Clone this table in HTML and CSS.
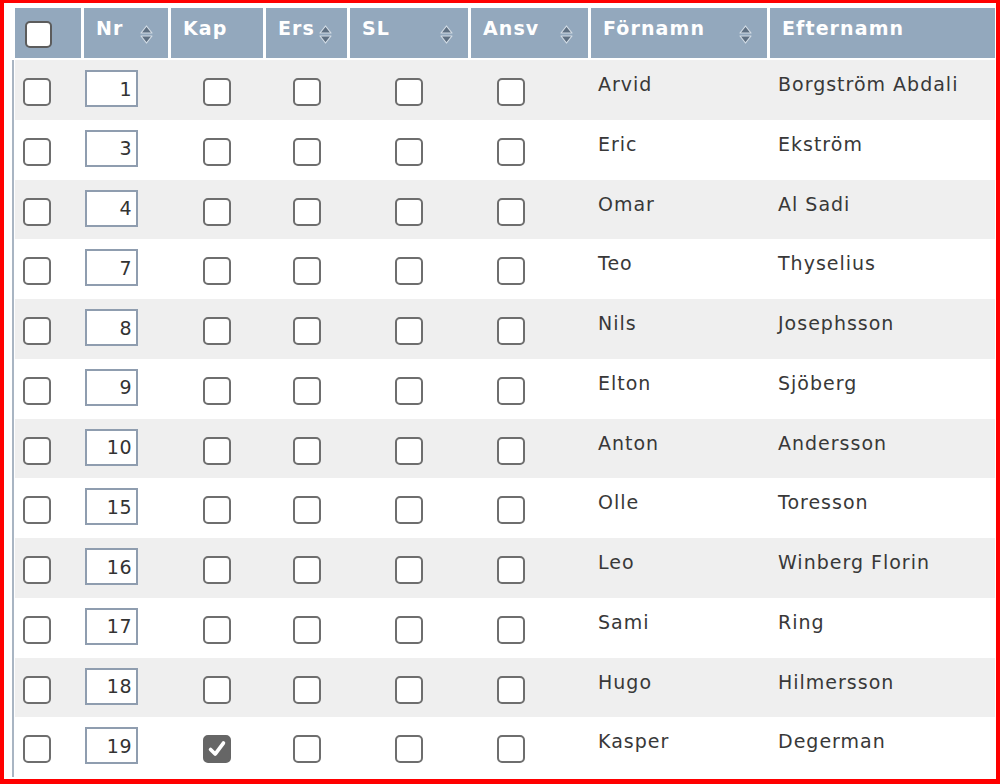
FILE: index.html
```html
<!DOCTYPE html>
<html lang="sv">
<head>
<meta charset="utf-8">
<title>Spelare</title>
<link rel="stylesheet" href="styles.css">
</head>
<body>
<div class="frame">
  <div class="thead">
    <div class="th th-cb"><span class="cb cb-head"></span></div>
    <div class="th"><span>Nr</span><svg class="sort" viewBox="0 0 13 19" width="13" height="19"><path d="M6.5 1 L12 8 H1 Z M1 11 H12 L6.5 18 Z" /></svg></div>
    <div class="th"><span>Kap</span></div>
    <div class="th th-tight"><span>Ers</span><svg class="sort" viewBox="0 0 13 19" width="13" height="19"><path d="M6.5 1 L12 8 H1 Z M1 11 H12 L6.5 18 Z" /></svg></div>
    <div class="th"><span>SL</span><svg class="sort" viewBox="0 0 13 19" width="13" height="19"><path d="M6.5 1 L12 8 H1 Z M1 11 H12 L6.5 18 Z" /></svg></div>
    <div class="th"><span>Ansv</span><svg class="sort" viewBox="0 0 13 19" width="13" height="19"><path d="M6.5 1 L12 8 H1 Z M1 11 H12 L6.5 18 Z" /></svg></div>
    <div class="th"><span>Förnamn</span><svg class="sort" viewBox="0 0 13 19" width="13" height="19"><path d="M6.5 1 L12 8 H1 Z M1 11 H12 L6.5 18 Z" /></svg></div>
    <div class="th"><span>Efternamn</span></div>
  </div>
  <div class="tbody">
    <div class="tr odd"><div class="td td-sel"><span class="cb"></span></div><div class="td td-nr"><span class="nr">1</span></div><div class="td td-c"><span class="cb"></span></div><div class="td td-c"><span class="cb"></span></div><div class="td td-c"><span class="cb"></span></div><div class="td td-ansv"><span class="cb"></span></div><div class="td td-txt">Arvid</div><div class="td td-txt td-last">Borgström Abdali</div></div>
    <div class="tr"><div class="td td-sel"><span class="cb"></span></div><div class="td td-nr"><span class="nr">3</span></div><div class="td td-c"><span class="cb"></span></div><div class="td td-c"><span class="cb"></span></div><div class="td td-c"><span class="cb"></span></div><div class="td td-ansv"><span class="cb"></span></div><div class="td td-txt">Eric</div><div class="td td-txt td-last">Ekström</div></div>
    <div class="tr odd"><div class="td td-sel"><span class="cb"></span></div><div class="td td-nr"><span class="nr">4</span></div><div class="td td-c"><span class="cb"></span></div><div class="td td-c"><span class="cb"></span></div><div class="td td-c"><span class="cb"></span></div><div class="td td-ansv"><span class="cb"></span></div><div class="td td-txt">Omar</div><div class="td td-txt td-last">Al Sadi</div></div>
    <div class="tr"><div class="td td-sel"><span class="cb"></span></div><div class="td td-nr"><span class="nr">7</span></div><div class="td td-c"><span class="cb"></span></div><div class="td td-c"><span class="cb"></span></div><div class="td td-c"><span class="cb"></span></div><div class="td td-ansv"><span class="cb"></span></div><div class="td td-txt">Teo</div><div class="td td-txt td-last">Thyselius</div></div>
    <div class="tr odd"><div class="td td-sel"><span class="cb"></span></div><div class="td td-nr"><span class="nr">8</span></div><div class="td td-c"><span class="cb"></span></div><div class="td td-c"><span class="cb"></span></div><div class="td td-c"><span class="cb"></span></div><div class="td td-ansv"><span class="cb"></span></div><div class="td td-txt">Nils</div><div class="td td-txt td-last">Josephsson</div></div>
    <div class="tr"><div class="td td-sel"><span class="cb"></span></div><div class="td td-nr"><span class="nr">9</span></div><div class="td td-c"><span class="cb"></span></div><div class="td td-c"><span class="cb"></span></div><div class="td td-c"><span class="cb"></span></div><div class="td td-ansv"><span class="cb"></span></div><div class="td td-txt">Elton</div><div class="td td-txt td-last">Sjöberg</div></div>
    <div class="tr odd"><div class="td td-sel"><span class="cb"></span></div><div class="td td-nr"><span class="nr">10</span></div><div class="td td-c"><span class="cb"></span></div><div class="td td-c"><span class="cb"></span></div><div class="td td-c"><span class="cb"></span></div><div class="td td-ansv"><span class="cb"></span></div><div class="td td-txt">Anton</div><div class="td td-txt td-last">Andersson</div></div>
    <div class="tr"><div class="td td-sel"><span class="cb"></span></div><div class="td td-nr"><span class="nr">15</span></div><div class="td td-c"><span class="cb"></span></div><div class="td td-c"><span class="cb"></span></div><div class="td td-c"><span class="cb"></span></div><div class="td td-ansv"><span class="cb"></span></div><div class="td td-txt">Olle</div><div class="td td-txt td-last">Toresson</div></div>
    <div class="tr odd"><div class="td td-sel"><span class="cb"></span></div><div class="td td-nr"><span class="nr">16</span></div><div class="td td-c"><span class="cb"></span></div><div class="td td-c"><span class="cb"></span></div><div class="td td-c"><span class="cb"></span></div><div class="td td-ansv"><span class="cb"></span></div><div class="td td-txt">Leo</div><div class="td td-txt td-last">Winberg Florin</div></div>
    <div class="tr"><div class="td td-sel"><span class="cb"></span></div><div class="td td-nr"><span class="nr">17</span></div><div class="td td-c"><span class="cb"></span></div><div class="td td-c"><span class="cb"></span></div><div class="td td-c"><span class="cb"></span></div><div class="td td-ansv"><span class="cb"></span></div><div class="td td-txt">Sami</div><div class="td td-txt td-last">Ring</div></div>
    <div class="tr odd"><div class="td td-sel"><span class="cb"></span></div><div class="td td-nr"><span class="nr">18</span></div><div class="td td-c"><span class="cb"></span></div><div class="td td-c"><span class="cb"></span></div><div class="td td-c"><span class="cb"></span></div><div class="td td-ansv"><span class="cb"></span></div><div class="td td-txt">Hugo</div><div class="td td-txt td-last">Hilmersson</div></div>
    <div class="tr"><div class="td td-sel"><span class="cb"></span></div><div class="td td-nr"><span class="nr">19</span></div><div class="td td-c"><span class="cb cb-on"><svg viewBox="0 0 24 24" width="22" height="22"><path d="M5 12.5 L10 17.5 L19 5.5" /></svg></span></div><div class="td td-c"><span class="cb"></span></div><div class="td td-c"><span class="cb"></span></div><div class="td td-ansv"><span class="cb"></span></div><div class="td td-txt">Kasper</div><div class="td td-txt td-last">Degerman</div></div>
  </div>
</div>
</body>
</html>
```
FILE: styles.css
```css
html, body {
  margin: 0;
  padding: 0;
  background: #ffffff;
}

.frame {
  box-sizing: border-box;
  width: 1000px;
  height: 784px;
  border-style: solid;
  border-color: #ff0000;
  border-width: 3px 4px 5px 4px;
  padding: 5px 1px 0 8px;
  background: #ffffff;
  font-family: "DejaVu Sans", Verdana, sans-serif;
  overflow: hidden;
}

.thead,
.tr {
  display: grid;
  grid-template-columns: 66px 84px 92px 81px 118px 117px 176px 225px;
  column-gap: 3px;
}

.thead {
  margin-left: 3px;
  height: 50px;
  margin-bottom: 2px;
}

.th {
  background: #93a8bd;
  color: #ffffff;
  font-weight: bold;
  font-size: 19px;
  letter-spacing: 1.1px;
  line-height: 22px;
  padding: 9px 15px 0 12px;
  display: flex;
  justify-content: space-between;
  align-items: flex-start;
}

.th-cb {
  padding: 13px 0 0 10px;
}

.sort {
  margin-top: 8px;
  flex: none;
}

.sort path {
  fill: #5f7082;
  stroke: #d3dce5;
  stroke-width: 1.2;
  stroke-linejoin: round;
}

.tbody {
  border-left: 2px solid #a9b5c3;
  padding-left: 1px;
}

.tr {
  height: 59.75px;
  align-items: start;
  background: #ffffff;
}

.tr.odd {
  background: #efefef;
}

.td {
  display: flex;
  color: #383838;
  font-size: 19px;
  letter-spacing: 1px;
  line-height: 22px;
}

.td-sel {
  padding: 18px 0 0 8px;
}

.td-nr {
  padding: 10px 0 0 1px;
}

.td-c {
  justify-content: center;
  padding-top: 18px;
}

.td-ansv {
  padding: 18px 0 0 26px;
}

.td-txt {
  padding: 13px 0 0 7px;
}

.td-last {
  padding-left: 8px;
}

.cb {
  box-sizing: border-box;
  width: 28px;
  height: 28px;
  border: 2px solid #6e6e6e;
  border-radius: 5px;
  background: #ffffff;
  display: flex;
  align-items: center;
  justify-content: center;
}

.cb-head {
  width: 27px;
  height: 27px;
  border-color: #5c5c5c;
}

.cb-on {
  background: #666666;
  border-color: #666666;
}

.cb-on path {
  fill: none;
  stroke: #ffffff;
  stroke-width: 4;
  stroke-linecap: round;
  stroke-linejoin: round;
}

.nr {
  box-sizing: border-box;
  width: 53px;
  height: 37px;
  border: 2px solid #8f9daf;
  background: #ffffff;
  display: flex;
  align-items: center;
  justify-content: flex-end;
  padding-right: 4px;
  font-size: 19px;
  letter-spacing: 0.5px;
  color: #333333;
}
```
